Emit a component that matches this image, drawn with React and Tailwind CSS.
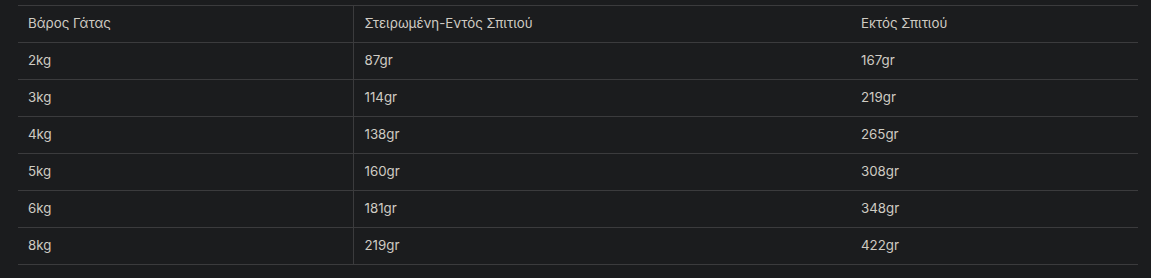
const ROWS = [
  ["2kg", "87gr", "167gr"],
  ["3kg", "114gr", "219gr"],
  ["4kg", "138gr", "265gr"],
  ["5kg", "160gr", "308gr"],
  ["6kg", "181gr", "348gr"],
  ["8kg", "219gr", "422gr"],
];

export default function App() {
  return (
    <div className="w-[1151px] h-[278px] bg-[#1b1c1e] pt-[5px] pl-[18px] font-['Inter',sans-serif] text-[13.3px] text-[#cfcbc3]">
      <table className="table-fixed border-collapse w-[1120px]">
        <colgroup>
          <col className="w-[335px]" />
          <col className="w-[497px]" />
          <col className="w-[288px]" />
        </colgroup>
        <thead>
          <tr className="h-[37px] border-t border-b border-[#3b3b3d] text-left">
            <th className="font-normal pl-[10px] border-r border-[#3b3b3d]">Βάρος Γάτας</th>
            <th className="font-normal pl-[11px]">Στειρωμένη-Εντός Σπιτιού</th>
            <th className="font-normal pl-[11px]">Εκτός Σπιτιού</th>
          </tr>
        </thead>
        <tbody>
          {ROWS.map(([w, a, b]) => (
            <tr key={w} className="h-[37px] border-b border-[#3b3b3d]">
              <td className="pl-[10px] border-r border-[#3b3b3d]">{w}</td>
              <td className="pl-[11px]">{a}</td>
              <td className="pl-[11px]">{b}</td>
            </tr>
          ))}
        </tbody>
      </table>
    </div>
  );
}
